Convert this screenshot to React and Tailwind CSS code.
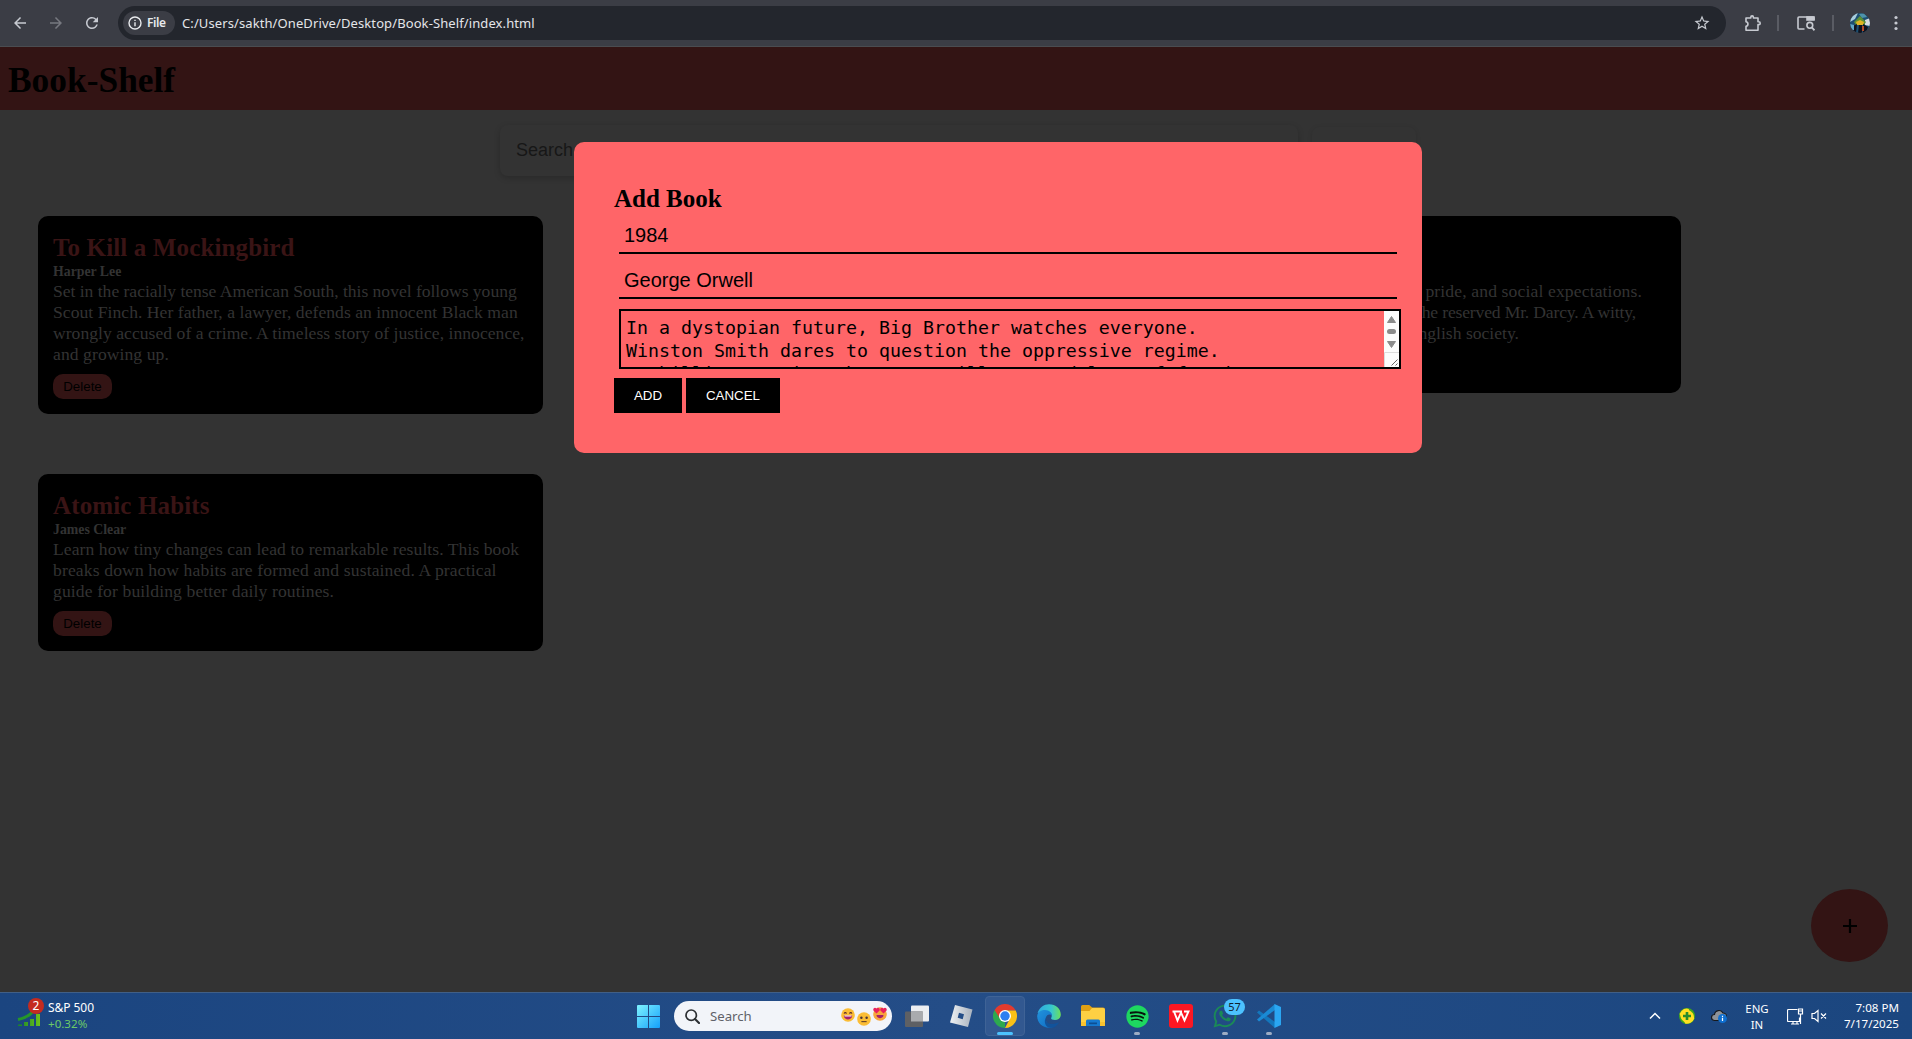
import { FaSpotify, FaWhatsapp } from "react-icons/fa";
import { MdArrowBack, MdArrowForward, MdRefresh, MdStarBorder } from "react-icons/md";

function Toolbar() {
  return (
    <div className="flex h-[47px] shrink-0 items-start border-b border-[#4a4c50] bg-[#3b3d45] font-['Noto_Sans',sans-serif] text-[#c7cad1]">
      <div className="flex h-[46px] w-[118px] items-center">
        <MdArrowBack className="ml-[11px] size-[18px]" />
        <MdArrowForward className="ml-[18px] size-[18px] text-[#777980]" />
        <MdRefresh className="ml-[18px] size-[18px]" />
      </div>
      <div className="mt-[6px] flex h-[34px] w-[1608px] items-center rounded-full bg-[#23262d] pr-[15px] pl-[5px]">
        <div className="flex h-6 w-[52px] items-center rounded-full bg-[#3b3d45] pl-[5px] text-[#e8eaed]">
          <svg viewBox="0 0 14 14" className="size-[14px]" fill="none" stroke="currentColor" strokeWidth="1.4">
            <circle cx="7" cy="7" r="6" />
            <path d="M7 6.2v4M7 3.7v1.400" />
          </svg>
          <span className="ml-[5px] text-[12px] font-semibold tracking-[-0.4px]">File</span>
        </div>
        <span className="ml-[7px] flex-1 pt-px text-[13px] tracking-[0.1px] whitespace-nowrap text-[#e3e5e9]">
          C:/Users/sakth/OneDrive/Desktop/Book-Shelf/index.html
        </span>
        <MdStarBorder className="size-[18px]" />
      </div>
      <div className="flex h-[46px] items-center">
        <svg viewBox="0 0 18 18" className="ml-[18px] size-[18px]" fill="none" stroke="currentColor" strokeWidth="1.6" strokeLinejoin="round">
          <path d="M2 4h4.800V3.200a1.300 1.300 0 0 1 2.600 0V4H14v3.800h.800a1.400 1.400 0 0 1 0 2.800H14V16.200H2v-3.800c2.600-.3 2.600-4.300 0-4.600z" />
        </svg>
        <div className="ml-[15px] h-4 w-[2px] bg-[#5a5c64]" />
        <svg viewBox="0 0 18 16" className="ml-[18px] h-4 w-[18px]" fill="none" stroke="currentColor" strokeWidth="1.6">
          <path d="M7.500 14H2a1 1 0 0 1-1-1V3a1 1 0 0 1 1-1h14a1 1 0 0 1 1 1v2" />
          <rect x="10" y="2" width="7" height="3" fill="currentColor" />
          <circle cx="12.800" cy="10.300" r="2.900" />
          <path d="M14.800 12.400L17.500 15.300" strokeWidth="1.800" />
        </svg>
        <div className="ml-[17px] h-4 w-[2px] bg-[#5a5c64]" />
        <svg viewBox="0 0 20 20" className="ml-4 size-5">
          <clipPath id="avatar"><circle cx="10" cy="10" r="10" /></clipPath>
          <g clipPath="url(#avatar)">
            <rect width="20" height="20" fill="#1d4f72" />
            <path d="M0 0h8L5 6 0 9z" fill="#a9cddc" />
            <path d="M9 1l5-1 3 4-5 1z" fill="#4e93ab" />
            <path d="M15 7l5-2v8l-5-1z" fill="#d5dde2" />
            <path d="M4 9L10 3l6 6-2 3H6z" fill="#5d9134" />
            <path d="M6 9l4-2 4 2-1 3H7z" fill="#e0b422" />
            <path d="M3 13l4-2-1 9H3zM9 12h3v8H8zM13 11l5 3-2 6h-3z" fill="#10131d" />
            <path d="M0 11l4 1v5H1z" fill="#62a9c8" />
            <path d="M12 13h2v5h-2z" fill="#b04a2a" />
          </g>
        </svg>
        <svg viewBox="0 0 4 16" className="ml-6 h-4 w-1" fill="currentColor">
          <circle cx="2" cy="2.500" r="1.600" /><circle cx="2" cy="8" r="1.600" /><circle cx="2" cy="13.500" r="1.600" />
        </svg>
      </div>
    </div>
  );
}

function BookCard({ title, author, lines }) {
  return (
    <article className="w-[505px] rounded-[10px] bg-black p-[15px] font-['Liberation_Serif',serif] whitespace-nowrap text-[#333]">
      <h2 className="h-8 pt-px text-[25px] leading-8 font-bold tracking-[0.14px] text-[#3a1415]">{title}</h2>
      <h5 className="h-[18px] text-[13.8px] leading-[18px] font-bold">{author}</h5>
      <div className="text-[17.6px] leading-[21px]">{lines}</div>
      <button className="mt-[9px] block h-[25px] w-[59px] rounded-[10px] bg-[#331414] font-['Liberation_Sans',sans-serif] text-[13.33px] text-black">
        Delete
      </button>
    </article>
  );
}

function AddBookModal() {
  return (
    <div className="absolute top-[142px] left-[574px] h-[311px] w-[848px] rounded-[10px] bg-[#ff6568] p-10 font-['Liberation_Sans',sans-serif] text-black">
      <h2 className="h-8 pt-px font-['Liberation_Serif',serif] text-[25px] leading-8 font-bold">Add Book</h2>
      <div className="mx-[5px] mt-[5px] h-[35px] w-[778px] border-b-2 border-black p-[5px] text-[20px] leading-[23px]">1984</div>
      <div className="mx-[5px] mt-[10px] h-[35px] w-[778px] border-b-2 border-black p-[5px] text-[20px] leading-[23px]">George Orwell</div>
      <div className="mx-[5px] mt-[10px] flex h-[60px] w-[782px] overflow-hidden border-2 border-black">
        <div className="flex-1 overflow-hidden pt-[5px] pl-[5px] font-['DejaVu_Sans_Mono',monospace] text-[18.27px] leading-[23px] whitespace-pre">
          <div>In a dystopian future, Big Brother watches everyone.</div>
          <div>Winston Smith dares to question the oppressive regime.</div>
          <div>A chilling warning about surveillance and loss of freedom.</div>
        </div>
        <svg viewBox="0 0 15 56" className="h-14 w-[15px] bg-[#fcfcfc]">
          <g fill="#8b8b8b">
            <path d="M7.500 5.500L11.500 11.500H3.500z" stroke="#8b8b8b" strokeLinejoin="round" />
            <rect x="3" y="18" width="9" height="5" rx="2.500" />
            <path d="M7.500 36.500L11.500 30.500H3.500z" stroke="#8b8b8b" strokeLinejoin="round" />
          </g>
          <path d="M0.500 56V41.500H15" fill="none" stroke="#dcdcdc" />
          <path d="M7.500 54.500l6-6M11.500 54.500l2-2" stroke="#555" strokeWidth=".9" />
        </svg>
      </div>
      <div className="mt-[9px] flex gap-1 text-[13.33px] text-white">
        <button className="h-[35px] w-[68px] bg-black">ADD</button>
        <button className="h-[35px] w-[94px] bg-black">CANCEL</button>
      </div>
    </div>
  );
}

function Emoji({ kind, className }) {
  return (
    <svg viewBox="0 0 16 16" className={className}>
      <circle cx="8" cy="8" r="7.800" fill={kind === "love" ? "#f8a63c" : "#fbbd35"} />
      {kind === "laugh" && (
        <>
          <path d="M3.500 6.500c.6-1.600 2.200-1.600 2.800 0M9.700 6.500c.6-1.600 2.200-1.600 2.800 0" fill="none" stroke="#5b2a2a" strokeWidth="1.200" />
          <path d="M3.200 8.500h9.600c0 6-9.600 6-9.600 0z" fill="#a5206a" />
          <path d="M4 8.500h8v1.200H4z" fill="#fff" />
        </>
      )}
      {kind === "neutral" && (
        <>
          <circle cx="5" cy="6.500" r="1.400" fill="#4a3336" />
          <circle cx="11" cy="6.500" r="1.400" fill="#4a3336" />
          <path d="M5 11h6" stroke="#5b3a2a" strokeWidth="1.200" />
        </>
      )}
      {kind === "love" && (
        <>
          <path d="M4 7.500L.5 4C-.5 1.500 2.500-.5 4 2c1.500-2.500 4.500-.5 3.500 2zM12 7.500L8.500 4C7.500 1.500 10.500-.5 12 2c1.500-2.500 4.500-.5 3.500 2z" fill="#e8215c" />
          <path d="M4 9h8c0 5-8 5-8 0z" fill="#a5206a" />
        </>
      )}
    </svg>
  );
}

function AppSlot({ children, active, running }) {
  return (
    <div className="flex w-11 justify-center">
      <div className={active ? "flex h-10 w-10 flex-col items-center rounded-[4px] border border-[#3f6396] bg-[#325890]" : "flex h-10 w-10 flex-col items-center border border-transparent"}>
        <div className="mt-[7px] flex size-6 items-center justify-center">{children}</div>
        {active && <div className="mt-1 h-[3px] w-4 rounded-full bg-[#4cc2ff]" />}
        {running && <div className="mt-1 h-[3px] w-[6px] rounded-full bg-[#9dacc4]" />}
      </div>
    </div>
  );
}

function Taskbar() {
  return (
    <div className="flex h-[47px] shrink-0 border-t border-[#415f86] bg-linear-to-r from-[#1b4580] via-[#244d87] to-[#1b467f] font-['Noto_Sans',sans-serif] text-[12px] leading-4 text-white">
      <div className="flex w-[637px]">
        <svg viewBox="0 0 24 30" className="mt-[5px] ml-[17px] h-[30px] w-6 overflow-visible">
          <defs><linearGradient id="bars"><stop stopColor="#17832a" /><stop offset="1" stopColor="#6cc31a" /></linearGradient></defs>
          <path d="M1 26.500h4V28H1zM7 24h4v4H7zM13 21h4v7h-4zM19 16h4v12h-4z" fill="url(#bars)" />
          <path d="M1 21.500c6-1 11-3.500 15-8" fill="none" stroke="#25962a" strokeWidth="3" />
          <circle cx="19" cy="8" r="8" fill="#c42b1f" />
          <text x="19" y="12.300" fill="#fff" fontSize="12" textAnchor="middle">2</text>
        </svg>
        <div className="ml-[7px] pt-[7px]">
          <div className="tracking-[-0.05px]">S&amp;P 500</div>
          <div className="text-[11.6px] text-[#6cca67]">+0.32%</div>
        </div>
      </div>
      <svg viewBox="0 0 23 23" className="mt-3 size-[23px]">
        <defs><linearGradient id="win" x2="1" y2="1" gradientUnits="objectBoundingBox"><stop stopColor="#7ef3ff" /><stop offset="1" stopColor="#14a0fb" /></linearGradient></defs>
        <path d="M0 1a1 1 0 0 1 1-1h10v11H0zM12 0h10a1 1 0 0 1 1 1v10H12zM0 12h11v11H1a1 1 0 0 1-1-1zM12 12h11v10a1 1 0 0 1-1 1H12z" fill="url(#win)" />
      </svg>
      <div className="mt-2 ml-[14px] flex h-[30px] w-[218px] items-center rounded-full bg-[#f2f4f9] pl-[11px] text-[#5f6168]">
        <svg viewBox="0 0 15 15" className="size-[15px]" fill="none" stroke="#2c2f33" strokeWidth="1.700">
          <circle cx="6.200" cy="6.200" r="5.200" /><path d="M10 10l4 4" strokeWidth="2.100" strokeLinecap="round" />
        </svg>
        <span className="ml-[10px] w-[131px] text-[13.2px]">Search</span>
        <Emoji kind="laugh" className="mb-[2px] size-[14px]" />
        <Emoji kind="neutral" className="mt-[6px] ml-[2px] size-[14px]" />
        <Emoji kind="love" className="mb-1 ml-[2px] size-[14px]" />
      </div>
      <div className="mt-[3px] ml-[3px] flex">
        <AppSlot>
          <svg viewBox="0 0 24 24" className="size-6">
            <rect x="6" y="1.500" width="18" height="16" rx="1" fill="#eceef1" />
            <rect x="0" y="7.500" width="18" height="15.500" rx="1" fill="#5e6064" />
            <path d="M6 7.500h12v10H6z" fill="#a9abae" />
          </svg>
        </AppSlot>
        <AppSlot>
          <svg viewBox="0 0 24 24" className="size-6">
            <defs><linearGradient id="rbx"><stop stopColor="#eef1f4" /><stop offset="1" stopColor="#a9b2bd" /></linearGradient></defs>
            <path fillRule="evenodd" d="M6 1L23.500 5.500 19 23 1 18.500zM10 8.800l-1.300 5 5 1.400 1.300-5z" fill="url(#rbx)" />
          </svg>
        </AppSlot>
        <AppSlot active>
          <svg viewBox="0 0 24 24" className="size-6">
            <path d="M12 12L12 24A12 12 0 0 1 1.600 6z" fill="#2da94f" />
            <path d="M12 6.500h10.700L22.400 6A12 12 0 0 0 1.600 6l5.300 8.500z" fill="#e33b2e" />
            <path d="M16.800 14.700L12 24A12 12 0 0 0 22.700 6.500H12z" fill="#fbc116" />
            <circle cx="12" cy="12" r="6" fill="#fff" />
            <circle cx="12" cy="12" r="4.700" fill="#2d7ff0" />
          </svg>
        </AppSlot>
        <AppSlot>
          <svg viewBox="0 0 24 24" className="size-6">
            <defs>
              <linearGradient id="edgeTop"><stop stopColor="#2fa9e0" /><stop offset=".6" stopColor="#37c6cf" /><stop offset="1" stopColor="#6be05a" /></linearGradient>
              <linearGradient id="edgeSide" y2="1"><stop stopColor="#2293dd" /><stop offset="1" stopColor="#0f6cc4" /></linearGradient>
            </defs>
            <path d="M.6 9C2.500 3 7 .2 12 .2c7 0 11.800 4.800 11.800 10.300 0 3.300-2.500 5.500-5.800 5.500-3 0-4.500-1-3.700-2.300C16 10 12.500 7 9 7 5 7 2 9 .6 9z" fill="url(#edgeTop)" />
            <path d="M.2 12C.5 8 4 5.800 8 6c4.500.2 7 3 7 5.500-2-2-6-1-6.300 3.200-.2 4.300 4 8.100 7.500 8.300C8 26 0 20 .2 12z" fill="url(#edgeSide)" />
            <path d="M8.900 13.500c-1 6 5 8.500 13.200 4.700C20 22 17 23.800 14 23.800c-6 0-7.500-7-5.100-10.300z" fill="#12539b" />
          </svg>
        </AppSlot>
        <AppSlot>
          <svg viewBox="0 0 24 24" className="size-6">
            <path d="M0 2.500A1.500 1.500 0 0 1 1.500 1h6.700l3 2.500H22a2 2 0 0 1 2 2V9H0z" fill="#e0a012" />
            <path d="M0 7h8.500l2.500-3h11a2 2 0 0 1 2 2v16H0z" fill="#fdd043" />
            <path d="M0 18h24v4H0z" fill="#f9c22f" />
            <path d="M5 22v-5a1.500 1.500 0 0 1 1.500-1.500h11A1.500 1.500 0 0 1 19 17v5z" fill="#1679cf" />
            <path d="M8 18.500h8v1.700H8z" fill="#0d4f93" />
          </svg>
        </AppSlot>
        <AppSlot running>
          <div className="flex size-[21px] items-center justify-center rounded-full bg-[#08140c]">
            <FaSpotify className="size-[23px] shrink-0 text-[#1ed760]" />
          </div>
        </AppSlot>
        <AppSlot>
          <svg viewBox="0 0 24 24" className="size-6">
            <rect width="24" height="24" rx="3" fill="#fc1723" />
            <path d="M3.500 7.500h9.500M5 7.500l3.500 9 3.500-8 3.500 8 4-9h-4.500" fill="none" stroke="#fff" strokeWidth="1.900" />
          </svg>
        </AppSlot>
        <AppSlot running>
          <div className="relative">
            <FaWhatsapp className="size-[26px] text-[#1b8a57]" />
            <span className="absolute -top-[4px] left-3 flex h-4 w-[21px] items-center justify-center rounded-full bg-[#4cc2ff] text-[11px] text-[#10202c]">57</span>
          </div>
        </AppSlot>
        <AppSlot running>
          <svg viewBox="0 0 24 24" className="size-6">
            <path d="M0 8.500L2 6.500 18 18v6z" fill="#1377bd" />
            <path d="M0 15.500L2 17.500 18 6V0z" fill="#1a8ad4" />
            <path d="M17.500 0L24 3v18l-6.500 3z" fill="#2aa6f2" />
          </svg>
        </AppSlot>
      </div>
      <div className="ml-auto flex items-center pr-[13px]">
        <svg viewBox="0 0 12 8" className="h-2 w-3" fill="none" stroke="#fff" strokeWidth="1.500"><path d="M1 6.500l5-5 5 5" /></svg>
        <svg viewBox="0 0 16 16" className="ml-[18px] size-4">
          <circle cx="8" cy="8" r="8" fill="#3da51f" />
          <path d="M2.500 3A7.500 7.500 0 0 1 10 .9c-1 1.600 2.500 2 4 4.600 1.200 2 .8 4.500 1.300 5A8 8 0 0 1 6 15.500c.5-1.500-2.500-2.500-3.600-4.500C1.200 9 1.500 7 .5 6z" fill="#ffdf22" />
          <path d="M8 4v8M4 8h8" stroke="#278c2c" strokeWidth="2.600" />
        </svg>
        <svg viewBox="0 0 16 14" className="ml-4 h-[14px] w-4">
          <path d="M3.500 11.500a3 3 0 0 1 0-6A4.500 4.500 0 0 1 12 4a3 3 0 0 1 0 7.500z" fill="#8d9298" stroke="#16191d" strokeWidth="1.200" />
          <circle cx="11.500" cy="9.500" r="4.500" fill="#0f6fd0" />
          <path d="M11.500 8.800v3.200M11.500 6.700v1.200" stroke="#fff" strokeWidth="1.200" />
        </svg>
        <div className="ml-[17px] w-[26px] pt-px text-center text-[11.4px]">
          <div>ENG</div>
          <div>IN</div>
        </div>
        <svg viewBox="0 0 17 17" className="ml-[17px] size-[17px]" fill="none" stroke="#fff" strokeWidth="1.200">
          <path d="M10.500 1.500h-9a1 1 0 0 0-1 1v10a1 1 0 0 0 1 1h11v-4M4 16h8M6 13.500V16M10 13.500V16" />
          <path d="M11.500 1h4v5h-4zM11.500 3h4M13.500 6v10" />
        </svg>
        <svg viewBox="0 0 16 14" className="ml-[7px] h-[14px] w-4" fill="none" stroke="#fff" strokeWidth="1.200">
          <path d="M1 4.500h2.500L7 1.500v11l-3.500-3H1zM10 4.500l5 5M15 4.500l-5 5" />
        </svg>
        <div className="w-[72px] text-right text-[11.6px]">
          <div>7:08 PM</div>
          <div>7/17/2025</div>
        </div>
      </div>
    </div>
  );
}

export default function App() {
  return (
    <div className="relative flex h-[1039px] w-[1912px] flex-col overflow-hidden bg-[#333]">
      <Toolbar />
      <main className="flex-1">
        <header className="h-[63px] bg-[#331414] pl-2 font-['Liberation_Serif',serif] text-[35.4px] leading-[67px] font-bold text-black">
          Book-Shelf
        </header>
        <div className="flex gap-[14px] pt-[15px] pl-[500px] font-['Liberation_Sans',sans-serif] text-[18px]">
          <div className="flex h-[51px] w-[798px] items-center rounded-[8px] pl-[16px] text-[#171717] shadow-[0_2px_6px_rgba(0,0,0,0.2)]">Search</div>
          <div className="mt-[2px] h-[47px] w-[104px] rounded-[8px] shadow-[0_1px_5px_rgba(0,0,0,0.12)]" />
        </div>
        <section className="mt-10 ml-[38px] grid w-fit grid-cols-3 items-start gap-x-16 gap-y-[60px]">
          <BookCard
            title="To Kill a Mockingbird"
            author="Harper Lee"
            lines={
              <>
                <p className="tracking-[-0.03px]">Set in the racially tense American South, this novel follows young</p>
                <p className="tracking-[0.04px]">Scout Finch. Her father, a lawyer, defends an innocent Black man</p>
                <p className="tracking-[0.03px]">wrongly accused of a crime. A timeless story of justice, innocence,</p>
                <p className="tracking-[0.07px]">and growing up.</p>
              </>
            }
          />
          <div className="w-[505px]" />
          <BookCard
            title="Pride and Prejudice"
            author="Jane Austen"
            lines={
              <div className="text-right">
                <p className="w-[451px] tracking-[0.13px]">A timeless tale of love, pride, and social expectations.</p>
                <p className="w-[445px] tracking-[-0.17px]">Elizabeth Bennet spars with the reserved Mr. Darcy. A witty,</p>
                <p className="w-[328px]">romantic critique of English society.</p>
              </div>
            }
          />
          <BookCard
            title="Atomic Habits"
            author="James Clear"
            lines={
              <>
                <p className="tracking-[0.06px]">Learn how tiny changes can lead to remarkable results. This book</p>
                <p className="tracking-[0.13px]">breaks down how habits are formed and sustained. A practical</p>
                <p className="tracking-[0.11px]">guide for building better daily routines.</p>
              </>
            }
          />
        </section>
      </main>
      <Taskbar />
      <button className="absolute top-[889px] left-[1811px] flex h-[73px] w-[77px] items-center justify-center rounded-[50%] bg-[#331414]">
        <svg viewBox="0 0 14 14" className="size-[14px]" stroke="#000" strokeWidth="2.200"><path d="M7 0v14M0 7h14" /></svg>
      </button>
      <AddBookModal />
    </div>
  );
}
